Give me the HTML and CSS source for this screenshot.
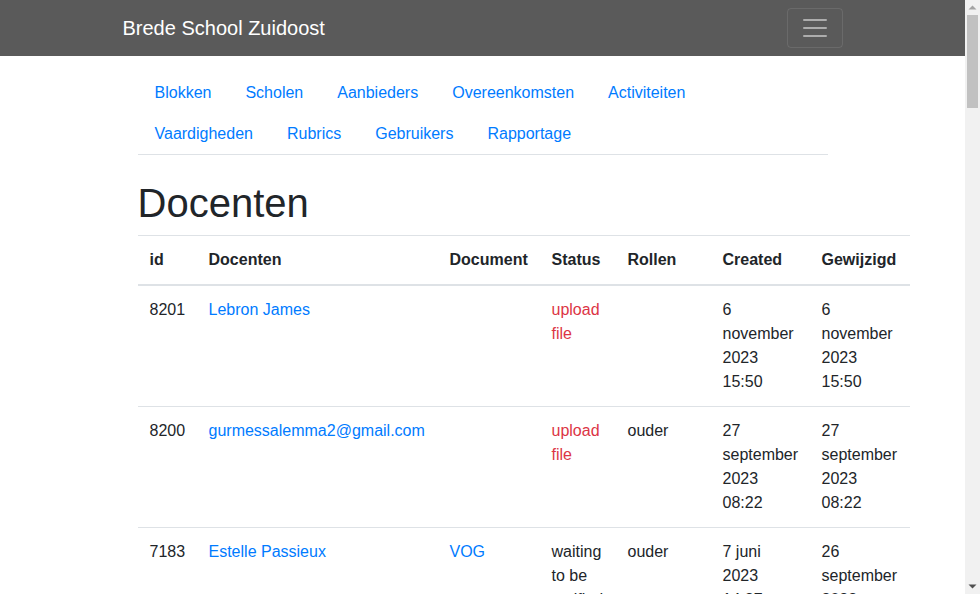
FILE: index.html
```html
<!DOCTYPE html>
<html lang="nl">
<head>
<meta charset="utf-8">
<title>Docenten - Brede School Zuidoost</title>
<link rel="stylesheet" href="styles.css">
</head>
<body>
<nav class="navbar">
  <div class="navbar-inner">
    <a class="brand" href="#">Brede School Zuidoost</a>
    <button class="toggler" type="button" aria-label="Menu">
      <svg class="toggler-icon" viewBox="0 0 30 30" width="30" height="30"><path stroke="rgba(255,255,255,0.5)" stroke-linecap="round" stroke-miterlimit="10" stroke-width="2" d="M4 7h22M4 15h22M4 23h22"/></svg>
    </button>
  </div>
</nav>
<main class="container">
  <ul class="subnav">
    <li><a class="subnav-link" href="#">Blokken</a></li>
    <li><a class="subnav-link" href="#">Scholen</a></li>
    <li><a class="subnav-link" href="#">Aanbieders</a></li>
    <li><a class="subnav-link" href="#">Overeenkomsten</a></li>
    <li><a class="subnav-link" href="#">Activiteiten</a></li>
    <li><a class="subnav-link" href="#">Vaardigheden</a></li>
    <li><a class="subnav-link" href="#">Rubrics</a></li>
    <li><a class="subnav-link" href="#">Gebruikers</a></li>
    <li><a class="subnav-link" href="#">Rapportage</a></li>
  </ul>
  <h1 class="title">Docenten</h1>
  <table class="data-table">
    <thead>
      <tr>
        <th class="col-id">id</th>
        <th class="col-name">Docenten</th>
        <th class="col-doc">Document</th>
        <th class="col-status">Status</th>
        <th class="col-rollen">Rollen</th>
        <th class="col-created">Created</th>
        <th class="col-updated">Gewijzigd</th>
      </tr>
    </thead>
    <tbody>
      <tr>
        <td>8201</td>
        <td><a class="link" href="#">Lebron James</a></td>
        <td></td>
        <td><a class="link-danger" href="#">upload file</a></td>
        <td></td>
        <td>6 november 2023 15:50</td>
        <td>6 november 2023 15:50</td>
      </tr>
      <tr>
        <td>8200</td>
        <td><a class="link" href="#">gurmessalemma2@gmail.com</a></td>
        <td></td>
        <td><a class="link-danger" href="#">upload file</a></td>
        <td>ouder</td>
        <td>27 september 2023 08:22</td>
        <td>27 september 2023 08:22</td>
      </tr>
      <tr>
        <td>7183</td>
        <td><a class="link" href="#">Estelle Passieux</a></td>
        <td><a class="link" href="#">VOG</a></td>
        <td>waiting to be verified</td>
        <td>ouder</td>
        <td>7 juni 2023 14:27</td>
        <td>26 september 2023 10:12</td>
      </tr>
      <tr>
        <td>7150</td>
        <td><a class="link" href="#">Sanne de Vries</a></td>
        <td><a class="link" href="#">VOG</a></td>
        <td>verified</td>
        <td>docent</td>
        <td>2 juni 2023 09:41</td>
        <td>12 juni 2023 11:03</td>
      </tr>
      <tr>
        <td>7102</td>
        <td><a class="link" href="#">Mohamed El Amrani</a></td>
        <td></td>
        <td><a class="link-danger" href="#">upload file</a></td>
        <td>docent</td>
        <td>24 mei 2023 13:15</td>
        <td>24 mei 2023 13:15</td>
      </tr>
    </tbody>
  </table>
</main>
<div class="scrollbar" aria-hidden="true">
  <div class="sb-button">
    <svg width="15" height="15" viewBox="0 0 15 15"><path d="M3.5 9.5h8l-4-4z" fill="#a3a3a3"/></svg>
  </div>
  <div class="sb-track"><div class="sb-thumb"></div></div>
  <div class="sb-button">
    <svg width="15" height="15" viewBox="0 0 15 15"><path d="M3.5 5.5h8l-4 4z" fill="#505050"/></svg>
  </div>
</div>
</body>
</html>
```
FILE: styles.css
```css
*, *::before, *::after { box-sizing: border-box; }

html, body {
  margin: 0;
  padding: 0;
}

body {
  margin-right: 15px;
  font-family: "Liberation Sans", Arial, sans-serif;
  font-size: 16px;
  line-height: 1.5;
  color: #212529;
  background: #fff;
}

a { text-decoration: none; }

.navbar {
  background: #5a5a5a;
  padding: 8px 16px;
}

.navbar-inner {
  width: 720px;
  margin: 0 auto;
  display: flex;
  align-items: center;
  justify-content: space-between;
}

.brand {
  color: #fff;
  font-size: 20px;
  line-height: 30px;
  padding: 5px 0;
}

.toggler {
  width: 56px;
  height: 40px;
  padding: 4px 12px;
  background: transparent;
  border: 1px solid rgba(255, 255, 255, 0.1);
  border-radius: 4px;
  display: flex;
  align-items: center;
  justify-content: center;
}

.toggler-icon { display: block; }

.container {
  width: 720px;
  margin: 0 auto;
  padding: 0 15px;
}

.subnav {
  list-style: none;
  margin: 16px 0 24px;
  padding: 0;
  display: flex;
  flex-wrap: wrap;
  border-bottom: 1px solid #dee2e6;
}

.subnav li { display: block; }

.subnav-link {
  display: block;
  padding: 9px 17px 8px;
  color: #007bff;
}

.title {
  font-size: 40px;
  font-weight: 500;
  line-height: 1.2;
  margin: 0 0 8px;
}

.data-table {
  width: 772px;
  table-layout: fixed;
  border-collapse: collapse;
  margin-bottom: 16px;
}

.data-table th,
.data-table td {
  padding: 12px;
  vertical-align: top;
  border-top: 1px solid #dee2e6;
  text-align: left;
}

.data-table th {
  font-weight: 700;
  vertical-align: bottom;
  border-bottom: 2px solid #dee2e6;
}

.col-id { width: 59px; }
.col-name { width: 241px; }
.col-doc { width: 102px; }
.col-status { width: 76px; }
.col-rollen { width: 95px; }
.col-created { width: 99px; }
.col-updated { width: 100px; }

.link { color: #007bff; }
.link-danger { color: #dc3545; }

.scrollbar {
  position: fixed;
  top: 0;
  right: 0;
  width: 15px;
  height: 100vh;
  background: #f1f1f1;
  display: flex;
  flex-direction: column;
}

.sb-button {
  height: 15px;
  flex: none;
}

.sb-button svg { display: block; }

.sb-track {
  flex: 1;
  padding: 0 2px;
}

.sb-thumb {
  height: 93px;
  background: #c1c1c1;
}
```
